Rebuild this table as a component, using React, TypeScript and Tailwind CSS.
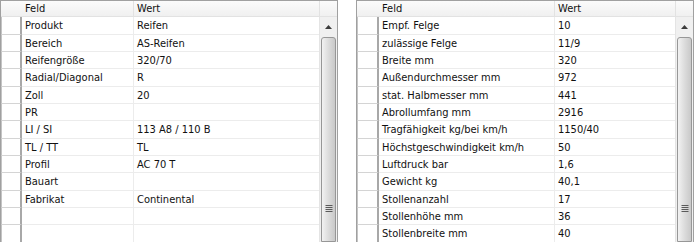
import React from "react";

type Row = [string, string];

const left: Row[] = [
  ["Produkt", "Reifen"],
  ["Bereich", "AS-Reifen"],
  ["Reifengröße", "320/70"],
  ["Radial/Diagonal", "R"],
  ["Zoll", "20"],
  ["PR", ""],
  ["LI / SI", "113 A8 / 110 B"],
  ["TL / TT", "TL"],
  ["Profil", "AC 70 T"],
  ["Bauart", ""],
  ["Fabrikat", "Continental"],
  ["", ""],
  ["", ""],
  ["", ""],
];

const right: Row[] = [
  ["Empf. Felge", "10"],
  ["zulässige Felge", "11/9"],
  ["Breite mm", "320"],
  ["Außendurchmesser mm", "972"],
  ["stat. Halbmesser mm", "441"],
  ["Abrollumfang mm", "2916"],
  ["Tragfähigkeit kg/bei km/h", "1150/40"],
  ["Höchstgeschwindigkeit km/h", "50"],
  ["Luftdruck bar", "1,6"],
  ["Gewicht kg", "40,1"],
  ["Stollenanzahl", "17"],
  ["Stollenhöhe mm", "36"],
  ["Stollenbreite mm", "40"],
  ["", ""],
];

function Scrollbar() {
  return (
    <div className="flex h-full w-[18px] shrink-0 flex-col border-l border-[#e4e4e4] bg-[#f0f0f0]">
      <div className="flex h-[20px] shrink-0 items-center justify-center">
        <svg width="7" height="4" viewBox="0 0 7 4">
          <path d="M3.5 0 L7 4 L0 4 Z" fill="#3c3c3c" />
        </svg>
      </div>
      <div className="relative mx-[1px] flex-1 rounded-t-[3px] border border-[#979797] bg-gradient-to-r from-[#f2f2f2] via-[#dcdcdc] to-[#c9c9c9]">
        <div className="absolute left-1/2 top-[167px] flex -translate-x-1/2 flex-col gap-[1px]">
          <div className="h-[1px] w-[7px] bg-[#5a5a5a]" />
          <div className="h-[1px] w-[7px] bg-[#5a5a5a]" />
          <div className="h-[1px] w-[7px] bg-[#5a5a5a]" />
          <div className="h-[1px] w-[7px] bg-[#5a5a5a]" />
        </div>
      </div>
    </div>
  );
}

function Grid({ rows, rh, feld }: { rows: Row[]; rh: number; feld: number }) {
  return (
    <div className="flex h-[242px] w-[338px] flex-col overflow-hidden border-l border-t border-r border-[#a0a0a0] bg-white">
      <div className="flex h-[16.33px] shrink-0 border-b border-[#e2e2e2] bg-gradient-to-b from-[#fbfbfb] to-[#f0f0f0]">
        <div style={{ width: rh - 1 }} className="shrink-0" />
        <div style={{ width: feld }} className="shrink-0 border-r border-[#e2e2e2] pl-[3px] leading-[16px]">
          Feld
        </div>
        <div className="flex-1 border-r border-[#e2e2e2] pl-[3px] leading-[16px]">Wert</div>
        <div className="w-[17px] shrink-0" />
      </div>
      <div className="flex min-h-0 flex-1">
        <div className="flex min-w-0 flex-1 flex-col">
          {rows.map((r, i) => (
            <div key={i} className="flex h-[17.33px] shrink-0">
              <div
                style={{ width: rh - 1 }}
                className="shrink-0 border-l border-r-2 border-b border-l-[#c4c4c4] border-r-[#a8a8a8] border-b-[#d4d4d4] bg-white"
              />
              <div
                style={{ width: feld }}
                className="shrink-0 overflow-hidden whitespace-nowrap border-b border-r border-[#ececec] pl-[3px] leading-[17px]"
              >
                {r[0]}
              </div>
              <div className="flex-1 overflow-hidden whitespace-nowrap border-b border-[#ececec] pl-[3px] leading-[17px]">
                {r[1]}
              </div>
            </div>
          ))}
        </div>
        <Scrollbar />
      </div>
    </div>
  );
}

export default function App() {
  return (
    <div
      className="flex h-[242px] w-[699px] gap-[18px] overflow-hidden bg-white text-[11px] text-[#111]"
      style={{ fontFamily: '"DejaVu Sans Condensed", "DejaVu Sans", sans-serif', fontStretch: "semi-condensed" }}
    >
      <Grid rows={left} rh={22} feld={112} />
      <Grid rows={right} rh={23} feld={176} />
    </div>
  );
}
